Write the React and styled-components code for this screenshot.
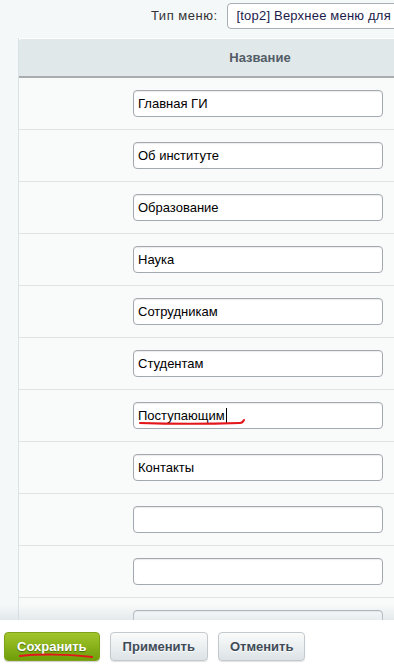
import React from "react";
import styled, { createGlobalStyle } from "styled-components";

const Global = createGlobalStyle`
  html, body { margin: 0; padding: 0; }
  body {
    background: #f5f8f9;
    font-family: "Liberation Sans", Arial, sans-serif;
    font-size: 13px;
    overflow: hidden;
  }
`;

const Page = styled.div`
  height: 672px;
  display: flex;
  flex-direction: column;
  overflow: hidden;
`;

const TopBar = styled.div`
  height: 38px;
  flex: none;
  display: flex;
  align-items: flex-start;
  padding-left: 151px;
  padding-top: 3px;
  box-sizing: border-box;
  gap: 9px;
  white-space: nowrap;
  overflow: hidden;
`;

const Label = styled.span`
  color: #333;
  line-height: 26px;
  font-size: 13px;
  letter-spacing: 0.5px;
`;

const Select = styled.div`
  height: 26px;
  box-sizing: border-box;
  border: 1px solid #a9aeb4;
  border-radius: 4px;
  background: #fff;
  padding: 0 9px;
  line-height: 24px;
  color: #1c1c4a;
  font-size: 13px;
  letter-spacing: 0.2px;
  width: 300px;
  flex: none;
  overflow: hidden;
`;

const TableArea = styled.div`
  flex: 1;
  min-height: 0;
  overflow: hidden;
  padding-left: 18px;
`;

const Table = styled.div`
  width: 600px;
  border-left: 1px solid #d9e2e5;
  background: #f9fafa;
`;

const HeaderRow = styled.div`
  display: flex;
  height: 40px;
  background: #e1e8ea;
  border-top: 1px solid #fff;
  border-bottom: 2px solid #a9adb0;
  border-top-left-radius: 3px;
  box-sizing: border-box;
`;

const Row = styled.div`
  display: flex;
  height: 52px;
  box-sizing: border-box;
  border-bottom: 1px solid #dfe3e4;
`;

const SideCell = styled.div`
  width: 101px;
  flex: none;
`;

const NameCell = styled.div`
  width: 280px;
  flex: none;
  display: flex;
  align-items: ${(p) => (p.$head ? "center" : "flex-start")};
  justify-content: ${(p) => (p.$head ? "center" : "flex-start")};
  padding: ${(p) => (p.$head ? "0" : "12px 0 0 13px")};
  box-sizing: border-box;
  font-weight: ${(p) => (p.$head ? "bold" : "normal")};
  color: #525c66;
  position: relative;
`;

const Field = styled.div`
  width: 250px;
  height: 27px;
  box-sizing: border-box;
  border: 1px solid #a3a9b1;
  border-radius: 4px;
  background: #fff;
  box-shadow: inset 0 1px 1px rgba(0, 0, 0, 0.08);
  padding: 0 4px;
  line-height: 25px;
  color: #000;
  font-size: 13px;
  position: relative;
  display: flex;
  align-items: center;
`;

const Caret = styled.span`
  display: inline-block;
  width: 1px;
  height: 15px;
  background: #000;
  margin-left: 1px;
`;

const Scribble = styled.svg`
  position: absolute;
  pointer-events: none;
  overflow: visible;
`;

const Footer = styled.div`
  height: 52px;
  flex: none;
  background: #fff;
  display: flex;
  align-items: flex-start;
  gap: 10px;
  padding: 12px 0 0 4px;
  box-sizing: border-box;
  position: relative;
  &::before {
    content: "";
    position: absolute;
    left: 0;
    right: 0;
    top: -16px;
    height: 16px;
    background: linear-gradient(rgba(210, 220, 224, 0), rgba(210, 220, 224, 0.55));
  }
`;

const Button = styled.button`
  height: 29px;
  box-sizing: border-box;
  padding: 0 ${(p) => p.$pad}px;
  border-radius: 4px;
  font-family: "Liberation Sans", Arial, sans-serif;
  font-size: 13px;
  font-weight: bold;
  position: relative;
  cursor: pointer;
  ${(p) =>
    p.$primary
      ? `
    background: linear-gradient(#a2c52c, #6f9e0a);
    border: 1px solid #7da21a;
    color: #fff;
    text-shadow: 0 1px 1px rgba(40,60,0,0.6);
    box-shadow: 0 1px 1px rgba(0,0,0,0.2);
  `
      : `
    background: linear-gradient(#fafbfb, #dce3e6);
    border: 1px solid #c3c9cc;
    color: #3f4c57;
    text-shadow: 0 1px 0 #fff;
    box-shadow: 0 1px 1px rgba(0,0,0,0.12);
  `}
`;

const items = [
  "Главная ГИ",
  "Об институте",
  "Образование",
  "Наука",
  "Сотрудникам",
  "Студентам",
  "Поступающим",
  "Контакты",
  "",
  "",
  "",
];

export default function App() {
  return (
    <>
      <Global />
      <Page>
        <TopBar>
          <Label>Тип меню:</Label>
          <Select>[top2] Верхнее меню для факультетов</Select>
        </TopBar>
        <TableArea>
          <Table>
            <HeaderRow>
              <SideCell />
              <NameCell $head>Название</NameCell>
            </HeaderRow>
            {items.map((t, i) => (
              <Row key={i}>
                <SideCell />
                <NameCell>
                  <Field>
                    {t}
                    {t === "Поступающим" && (
                      <>
                        <Caret />
                        <Scribble
                          width="110"
                          height="10"
                          style={{ left: 5, top: 16 }}
                          viewBox="0 0 110 10"
                        >
                          <path
                            d="M1 4 C 30 5, 70 5, 101 4 C 103 4, 104 3, 105 1"
                            stroke="#e3161b"
                            strokeWidth="2"
                            fill="none"
                            strokeLinecap="round"
                          />
                        </Scribble>
                      </>
                    )}
                  </Field>
                </NameCell>
              </Row>
            ))}
          </Table>
        </TableArea>
        <Footer>
          <Button $primary $pad={12}>
            Сохранить
            <Scribble
              width="75"
              height="8"
              style={{ left: 14, top: 20 }}
              viewBox="0 0 75 8"
            >
              <path
                d="M1 3 C 20 1, 50 1, 73 4"
                stroke="#e3161b"
                strokeWidth="2"
                fill="none"
                strokeLinecap="round"
              />
            </Scribble>
          </Button>
          <Button $pad={12}>Применить</Button>
          <Button $pad={11}>Отменить</Button>
        </Footer>
      </Page>
    </>
  );
}
